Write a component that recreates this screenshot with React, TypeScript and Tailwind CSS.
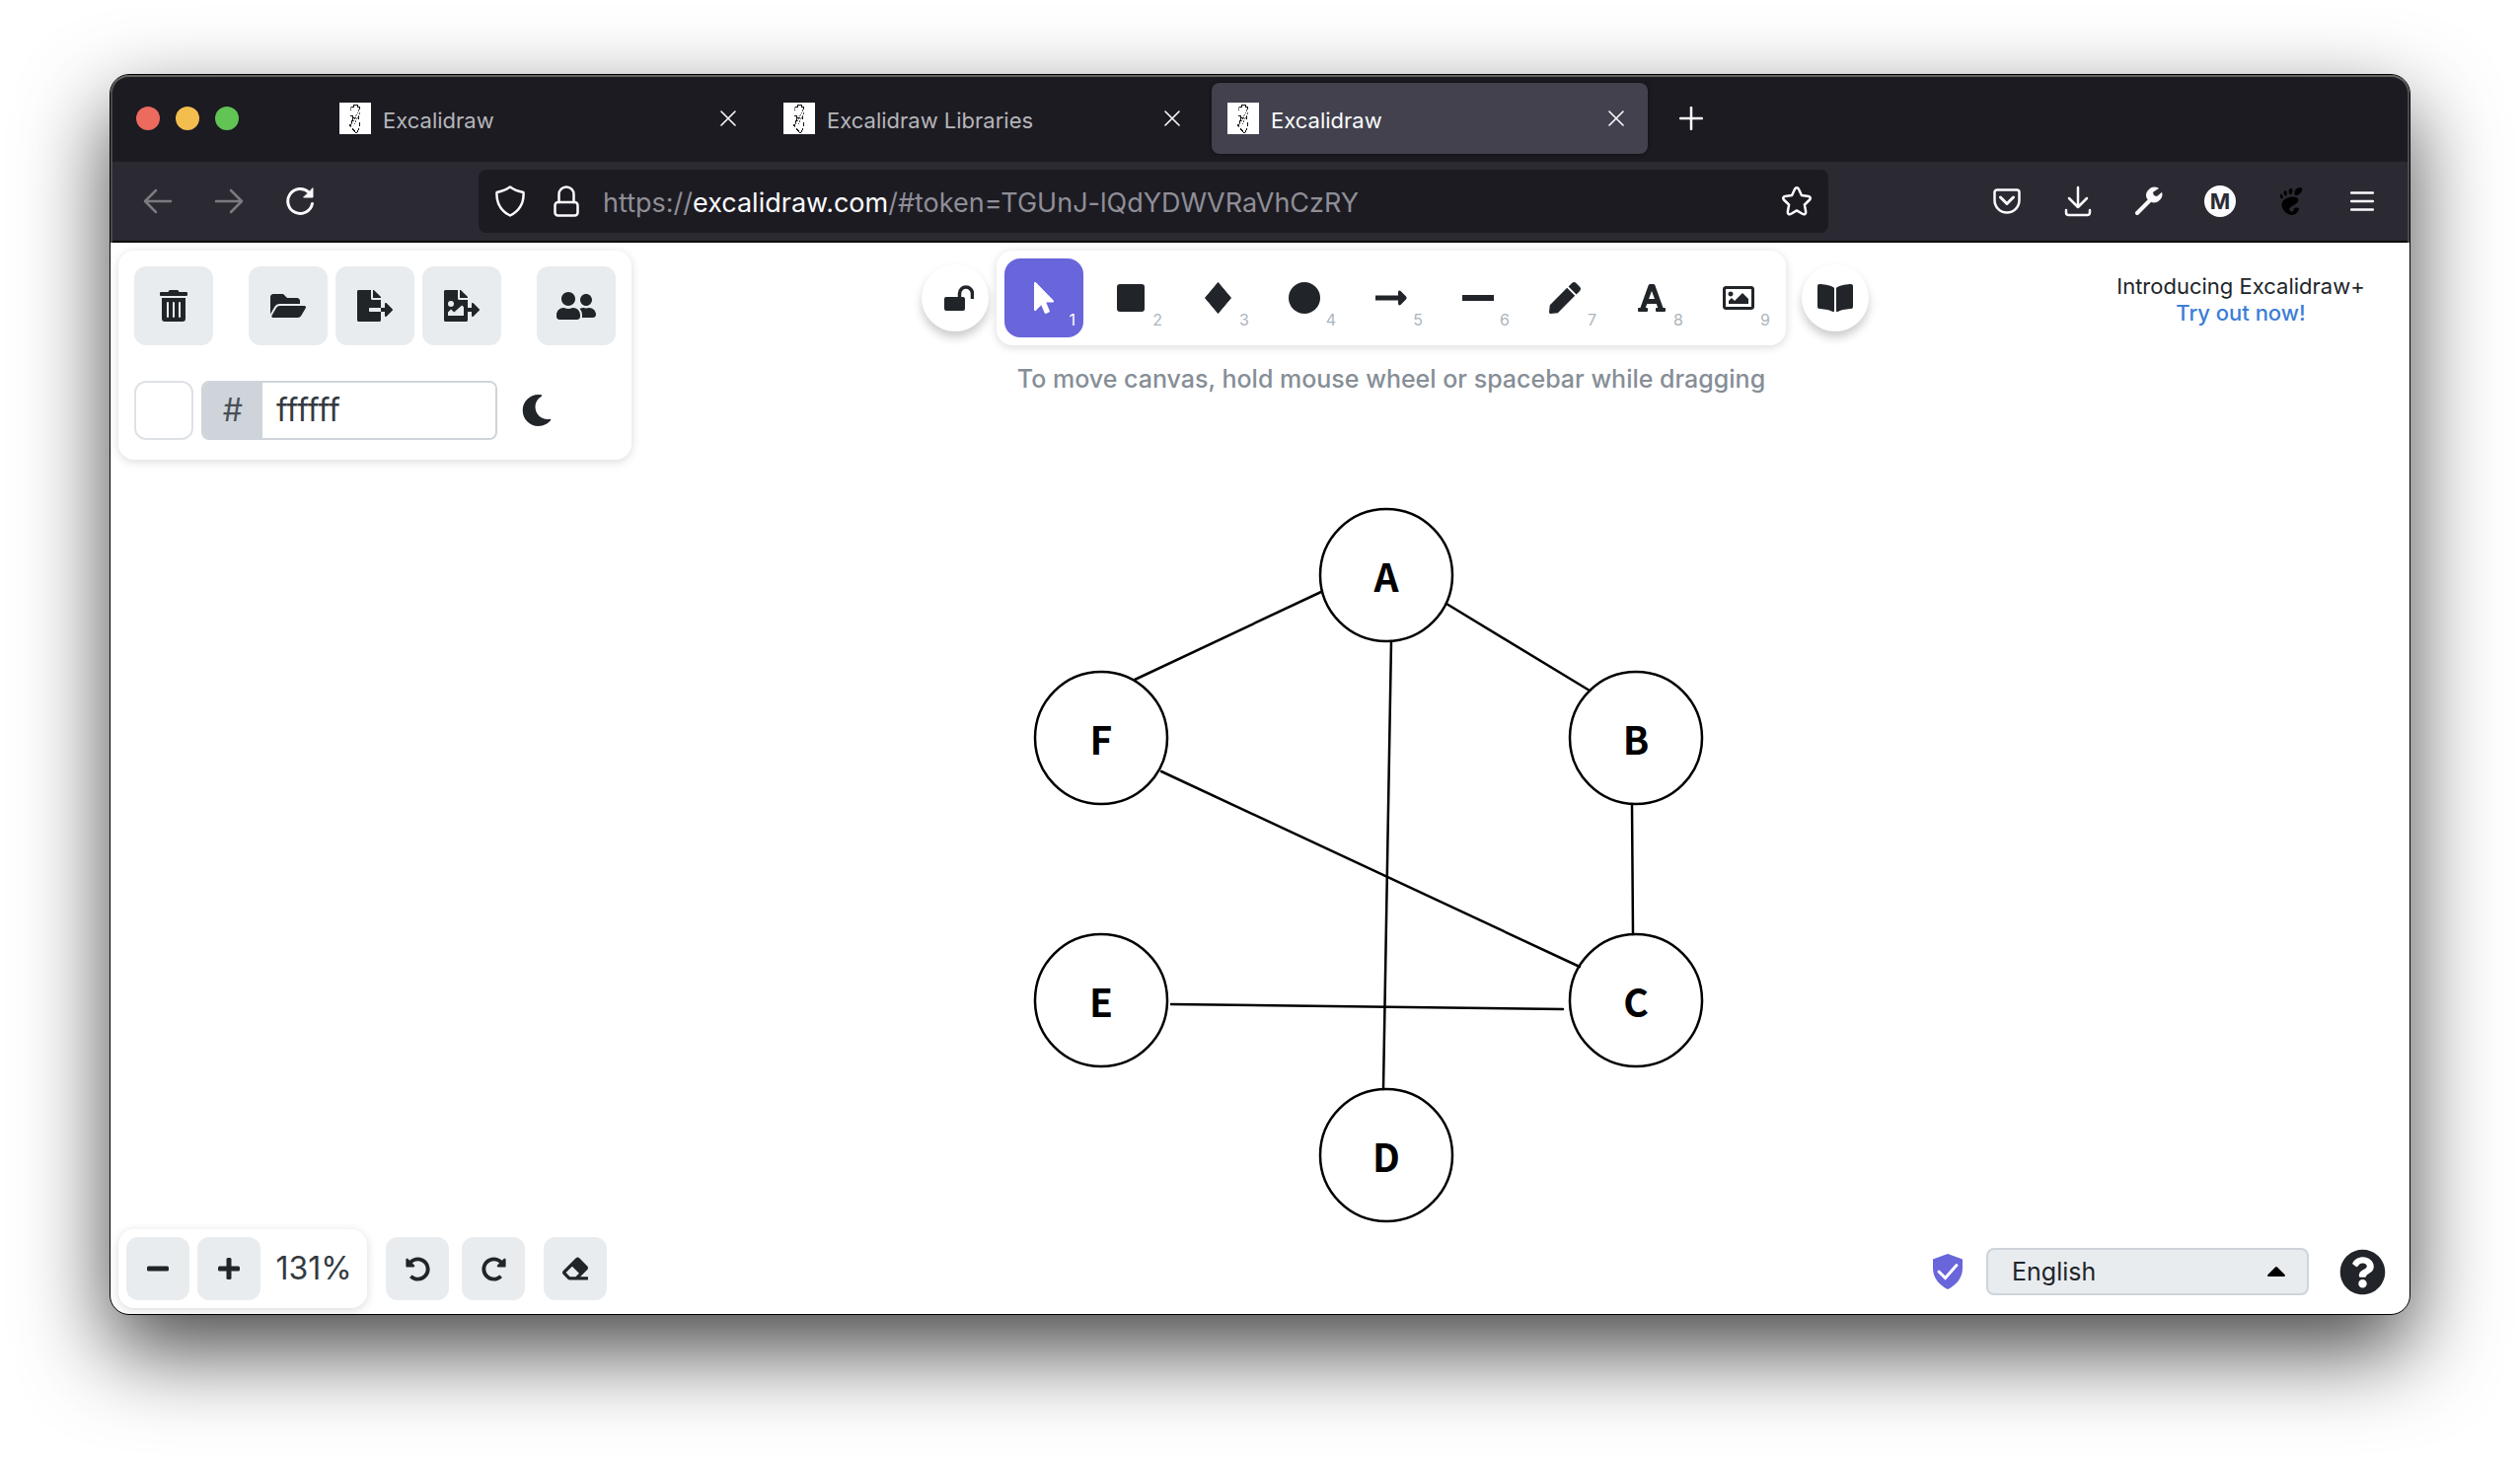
import React from "react";
import {
  FaBookOpen,
  FaEraser,
  FaFileExport,
  FaFolderOpen,
  FaFont,
  FaMoon,
  FaMousePointer,
  FaPen,
  FaQuestionCircle,
  FaRedoAlt,
  FaRegImage,
  FaTrashAlt,
  FaUndoAlt,
  FaUserFriends,
} from "react-icons/fa";
import { SiGnome } from "react-icons/si";

function Favicon() {
  return (
    <svg width="32" height="32" viewBox="0 0 32 32" shapeRendering="crispEdges" className="shrink-0 bg-white">
      <g fill="none" stroke="#111" strokeWidth="1">
        <path d="M12 4h2v-2h4v2h2v3" />
        <path d="M11 5v3" strokeDasharray="1 1" />
        <path d="M20 7l-9 18M21 10l-7 14" stroke="#555" strokeDasharray="2 1" />
        <path d="M11 13h2v2h4M14 16l-2 5" />
        <path d="M19 14v3M20 20v4M13 26l3 4h2l2-4" />
        <path d="M10 23h2" strokeWidth="2" />
      </g>
    </svg>
  );
}

function Tab({ title, active = false }: { title: string; active?: boolean }) {
  return (
    <div
      role="tab"
      aria-selected={active}
      className={
        active
          ? "flex h-[72px] w-[442px] min-w-0 items-center gap-3 rounded-lg bg-[#42414d] px-4 text-[#fbfbfe] shadow-[0_0_4px_rgba(0,0,0,0.5)]"
          : "flex h-[72px] w-[442px] min-w-0 items-center gap-3 rounded-lg px-4 text-[#b5b5ba]"
      }
    >
      <Favicon />
      <span className="min-w-0 flex-1 truncate pt-[3px] text-[22px] leading-7">{title}</span>
      <button aria-label={`Close ${title}`} className="flex size-8 items-center justify-center text-[#fbfbfe]">
        <svg width="16" height="16" viewBox="0 0 16 16" fill="none" stroke="currentColor" strokeWidth="1.6" strokeLinecap="round">
          <path d="M1 1l14 14M15 1L1 15" />
        </svg>
      </button>
    </div>
  );
}

function NavButton({ label, muted = false, children }: { label: string; muted?: boolean; children: React.ReactNode }) {
  return (
    <button
      aria-label={label}
      className={
        muted
          ? "flex h-16 w-14 items-center justify-center text-[#7b7b82]"
          : "flex h-16 w-14 items-center justify-center text-[#fbfbfe]"
      }
    >
      {children}
    </button>
  );
}

const line = {
  fill: "none",
  stroke: "currentColor",
  strokeWidth: 2.5,
  strokeLinecap: "round" as const,
  strokeLinejoin: "round" as const,
};

function BrowserHeader() {
  return (
    <header className="relative rounded-t-[19px] bg-[#1c1b22] after:pointer-events-none after:absolute after:inset-0 after:rounded-t-[19px] after:shadow-[inset_0_2px_0_#626461,inset_2px_0_0_#4a4a50,inset_-2px_0_0_#4a4a50] after:content-['']">
      <div className="flex h-[88px] items-center pl-[26px]">
        <div className="mr-[86px] flex gap-4">
          <button aria-label="Close window" className="size-6 rounded-full bg-[#ec6a5e]" />
          <button aria-label="Minimize window" className="size-6 rounded-full bg-[#f4be4f]" />
          <button aria-label="Zoom window" className="size-6 rounded-full bg-[#61c454]" />
        </div>
        <div role="tablist" className="flex min-w-0 gap-2">
          <Tab title="Excalidraw" />
          <Tab title="Excalidraw Libraries" />
          <Tab title="Excalidraw" active />
        </div>
        <button aria-label="New tab" className="ml-4 flex size-14 items-center justify-center text-[#fbfbfe]">
          <svg width="24" height="24" viewBox="0 0 24 24" {...line}>
            <path d="M12 1v22M1 12h22" />
          </svg>
        </button>
      </div>

      <nav className="flex h-[82px] items-center border-b-2 border-[#0c0c0d] bg-[#2b2a33] px-5">
        <div className="flex gap-4">
          <NavButton label="Back" muted>
            <svg width="30" height="26" viewBox="0 0 30 26" {...line}>
              <path d="M28 13H2M13 2L2 13l11 11" />
            </svg>
          </NavButton>
          <NavButton label="Forward" muted>
            <svg width="30" height="26" viewBox="0 0 30 26" {...line}>
              <path d="M2 13h26M17 2l11 11-11 11" />
            </svg>
          </NavButton>
          <NavButton label="Reload">
            <svg width="30" height="30" viewBox="0 0 30 30" {...line} strokeWidth="3">
              <path d="M27.500 17.500A12.500 12.500 0 1 1 24 6" />
              <path d="M28 2v9h-9z" fill="currentColor" stroke="currentColor" strokeWidth="1" />
            </svg>
          </NavButton>
        </div>

        <div className="mx-[153px] flex h-16 min-w-0 flex-1 items-center rounded-lg bg-[#1c1b22] pr-4 pl-4 text-[#fbfbfe]">
          <svg width="32" height="32" viewBox="0 0 32 32" {...line} className="shrink-0">
            <path d="M16 1.500c4 3 8.500 4.500 13.500 5.500.6 10-3.500 18.500-13.500 23.500C6 25.500 1.900 17 2.500 7 7.500 6 12 4.500 16 1.500z" />
          </svg>
          <svg width="26" height="32" viewBox="0 0 26 32" {...line} className="ml-7 shrink-0">
            <rect x="1.500" y="17" width="23" height="13.500" rx="3" />
            <path d="M5.500 17V9a7.500 7.500 0 0 1 15 0v8" />
          </svg>
          <div
            role="textbox"
            aria-label="Address"
            className="ml-6 min-w-0 flex-1 truncate pt-[3px] text-[27px] leading-9 text-[#8f8e97]"
          >
            https://<span className="text-[#fbfbfe]">excalidraw.com</span>/#token=TGUnJ-lQdYDWVRaVhCzRY
          </div>
          <button aria-label="Bookmark this page">
            <svg width="32" height="32" viewBox="0 0 32 32" {...line}>
              <path d="M16 2.200c.9 0 1.500.6 1.900 1.400l3 6.500 7 .9c1.900.3 2.500 2.200 1.200 3.500l-5.200 5 1.300 7.300c.3 1.800-1.500 3-3.100 2.200L16 25.400 9.900 29c-1.600.8-3.400-.4-3.100-2.200l1.300-7.300-5.200-5c-1.300-1.300-.7-3.200 1.200-3.500l7-.9 3-6.500c.4-.8 1-1.400 1.900-1.400z" />
            </svg>
          </button>
        </div>

        <div className="flex gap-4">
          <NavButton label="Save to Pocket">
            <svg width="28" height="26" viewBox="0 0 28 26" {...line}>
              <path d="M4 1.500h20A2.500 2.500 0 0 1 26.500 4v8a12.500 12.500 0 0 1-25 0V4A2.500 2.500 0 0 1 4 1.500z" />
              <path d="M7.500 9l6.500 6.500L20.500 9" strokeWidth="3" />
            </svg>
          </NavButton>
          <NavButton label="Downloads">
            <svg width="28" height="32" viewBox="0 0 28 32" {...line}>
              <path d="M14 2v20M5 13l9 9 9-9M2 25v2.500A2.500 2.500 0 0 0 4.500 30h19a2.500 2.500 0 0 0 2.500-2.500V25" />
            </svg>
          </NavButton>
          <NavButton label="Developer tools">
            <svg width="30" height="30" viewBox="0 0 30 30" {...line}>
              <path d="M3 27L16 14" strokeWidth="4" />
              <path
                d="M24 1.800a8 8 0 0 0-10.700 10.500 8 8 0 0 0 14.600-5.800L23 10.500l-3.500-1-1-3.500z"
                fill="currentColor"
                strokeWidth="1"
              />
            </svg>
          </NavButton>
          <NavButton label="Account">
            <span className="flex size-8 items-center justify-center rounded-full bg-[#fbfbfe] text-[22px] leading-none font-bold text-[#2b2a33]">
              M
            </span>
          </NavButton>
          <NavButton label="GNOME Shell integration">
            <SiGnome size={28} color="#000" />
          </NavButton>
          <NavButton label="Open menu">
            <svg width="24" height="20" viewBox="0 0 24 20" {...line}>
              <path d="M1 1.500h22M1 10h22M1 18.500h22" />
            </svg>
          </NavButton>
        </div>
      </nav>
    </header>
  );
}

function ToolButton({ label, children }: { label: string; children: React.ReactNode }) {
  return (
    <button
      aria-label={label}
      className="flex size-20 items-center justify-center rounded-xl bg-[#e9ecef] text-[#212529]"
    >
      {children}
    </button>
  );
}

function SmallButton({ label, children }: { label: string; children: React.ReactNode }) {
  return (
    <button
      aria-label={label}
      className="flex size-16 items-center justify-center rounded-xl bg-[#e9ecef] text-[#212529]"
    >
      {children}
    </button>
  );
}

function ExportImageIcon() {
  return (
    <svg width="36" height="32" viewBox="0 0 576 512" fill="currentColor">
      <path d="M384 121.900c0-6.300-2.500-12.400-7-16.900L279.100 7c-4.500-4.500-10.600-7-17-7H256v128h128z" />
      <path
        fillRule="evenodd"
        d="M224 136V0H24C10.700 0 0 10.700 0 24v464c0 13.300 10.700 24 24 24h336c13.300 0 24-10.700 24-24V352h64v65c0 15 17 22 27 12l96-97c7-7 7-17 0-24l-96-95c-10-10-27-3-27 11v64h-64V160H248c-13.200 0-24-10.800-24-24zM112 176a48 48 0 1 1 0 96 48 48 0 0 1 0-96zM64 416v-55l48-50 52 50 116-106c6-6 14-6 20 0l20 20v141z"
      />
    </svg>
  );
}

function MainMenu() {
  return (
    <section className="w-[520px] shrink-0 rounded-2xl bg-white px-4 pt-4 pb-5 shadow-[0_2px_10px_rgba(0,0,0,0.15)]">
      <div className="flex justify-between">
        <ToolButton label="Reset the canvas">
          <FaTrashAlt size={32} />
        </ToolButton>
        <div className="flex gap-2">
          <ToolButton label="Open">
            <FaFolderOpen size={36} />
          </ToolButton>
          <ToolButton label="Save as">
            <FaFileExport size={36} />
          </ToolButton>
          <ToolButton label="Save as image">
            <ExportImageIcon />
          </ToolButton>
        </div>
        <ToolButton label="Live collaboration">
          <FaUserFriends size={40} />
        </ToolButton>
      </div>
      <div className="mt-9 flex items-center">
        <button aria-label="Canvas background" className="size-[60px] rounded-xl border-2 border-[#dee2e6] bg-white" />
        <label className="ml-2 flex h-[60px] w-[300px] overflow-hidden rounded-lg border-2 border-[#ced4da] text-[#343a40]">
          <span className="flex w-[60px] items-center justify-center bg-[#ced4da] text-[32px] leading-10 text-[#495057]">#</span>
          <input aria-label="Hex color" defaultValue="ffffff" className="min-w-0 flex-1 bg-white px-3.5 text-[32px] leading-10 outline-none" />
        </label>
        <button aria-label="Dark mode" className="ml-6 text-[#212529]">
          <FaMoon size={32} />
        </button>
      </div>
    </section>
  );
}

const tools: { label: string; icon: React.ReactNode }[] = [
  { label: "Selection", icon: <FaMousePointer size={32} /> },
  { label: "Rectangle", icon: <span className="size-7 rounded-[3px] bg-current" /> },
  {
    label: "Diamond",
    icon: (
      <svg width="27" height="32" viewBox="0 0 27 32" fill="currentColor">
        <path d="M13.500 0.500L26.500 16 13.500 31.500 0.500 16z" stroke="currentColor" strokeLinejoin="round" />
      </svg>
    ),
  },
  { label: "Ellipse", icon: <span className="size-8 rounded-full bg-current" /> },
  {
    label: "Arrow",
    icon: (
      <svg width="32" height="16" viewBox="0 0 32 16" fill="currentColor">
        <path d="M0 5.500h23V2.500c0-2 1.600-2.500 2.800-1.300l5.200 5.400c.8.8.8 2 0 2.800l-5.200 5.400c-1.200 1.200-2.800.7-2.800-1.300v-3H0z" />
      </svg>
    ),
  },
  { label: "Line", icon: <span className="h-[6px] w-8 bg-current" /> },
  { label: "Draw", icon: <FaPen size={32} /> },
  { label: "Text", icon: <FaFont size={32} /> },
  { label: "Insert image", icon: <FaRegImage size={32} /> },
];

function Toolbar() {
  return (
    <div className="flex items-start">
      <button
        aria-label="Keep selected tool active after drawing"
        className="mt-[14px] flex size-[68px] items-center justify-center rounded-full bg-white text-[#212529] shadow-[0_6px_10px_rgba(0,0,0,0.2)]"
      >
        <svg width="30" height="26" viewBox="0 0 30 26" className="ml-2">
          <rect x="0" y="12" width="21" height="14" rx="2" fill="currentColor" />
          <path d="M15.500 13V8.500a6.500 6.500 0 0 1 13 0V14" fill="none" stroke="currentColor" strokeWidth="3.500" />
        </svg>
      </button>
      <div className="ml-2 flex flex-col items-center">
        <div role="toolbar" className="flex gap-2 rounded-2xl bg-white p-2 shadow-[0_2px_10px_rgba(0,0,0,0.15)]">
          {tools.map((tool, index) => (
            <button
              key={tool.label}
              aria-label={tool.label}
              aria-pressed={index === 0}
              className={
                index === 0
                  ? "relative flex size-20 items-center justify-center rounded-2xl bg-[#6965db] text-white"
                  : "relative flex size-20 items-center justify-center rounded-2xl text-[#212529]"
              }
            >
              {tool.icon}
              <span
                className={
                  index === 0
                    ? "absolute right-2 bottom-2 text-base leading-5"
                    : "absolute right-2 bottom-2 text-base leading-5 text-[#adb5bd]"
                }
              >
                {index + 1}
              </span>
            </button>
          ))}
        </div>
        <p className="mt-4 text-[25px] leading-9 font-medium text-[#868e96]">
          To move canvas, hold mouse wheel or spacebar while dragging
        </p>
      </div>
      <button
        aria-label="Library"
        className="mt-[14px] ml-4 flex size-[68px] items-center justify-center rounded-full bg-white text-[#212529] shadow-[0_6px_10px_rgba(0,0,0,0.2)]"
      >
        <FaBookOpen size={36} />
      </button>
    </div>
  );
}

const nodes = [
  { id: "A", x: 365, y: 73 },
  { id: "B", x: 618, y: 238 },
  { id: "C", x: 618, y: 504 },
  { id: "D", x: 365, y: 661 },
  { id: "E", x: 76, y: 504 },
  { id: "F", x: 76, y: 238 },
];

function Diagram() {
  return (
    <div className="absolute top-[264px] left-[928px] h-[740px] w-[696px]">
      <svg viewBox="0 0 696 740" className="absolute inset-0" fill="none" stroke="#000" strokeWidth="2.500" strokeLinecap="round">
        <path d="M299 90L110 179" />
        <path d="M426 102L571 190" />
        <path d="M370 140L362 594" />
        <path d="M137 272L561 470" />
        <path d="M614 305L615 437" />
        <path d="M147 508L544 513" />
        {nodes.map((node) => (
          <circle key={node.id} cx={node.x} cy={node.y} r="67" />
        ))}
      </svg>
      {nodes.map((node) => (
        <div
          key={node.id}
          className="absolute flex size-[136px] -translate-x-1/2 -translate-y-1/2 items-center justify-center font-['Noto_Sans_CJK_JP','Noto_Sans',sans-serif] text-[39px] leading-none font-bold text-black"
          style={{ left: node.x, top: node.y }}
        >
          {node.id}
        </div>
      ))}
    </div>
  );
}

function Footer() {
  return (
    <footer className="relative flex items-end justify-between pb-[6px]">
      <div className="flex items-center">
        <div className="flex w-[252px] items-center gap-2 rounded-2xl bg-white p-2 shadow-[0_2px_10px_rgba(0,0,0,0.15)]">
          <SmallButton label="Zoom out">
            <svg width="22" height="22" viewBox="0 0 22 22">
              <rect y="8.500" width="22" height="5" rx="1.500" fill="currentColor" />
            </svg>
          </SmallButton>
          <SmallButton label="Zoom in">
            <svg width="22" height="22" viewBox="0 0 22 22" fill="currentColor">
              <rect y="8.500" width="22" height="5" rx="1.500" />
              <rect x="8.500" width="5" height="22" rx="1.500" />
            </svg>
          </SmallButton>
          <span className="flex-1 text-center text-[32px] leading-10 text-[#343a40]">131%</span>
        </div>
        <div className="ml-[19px] flex gap-[13px]">
          <SmallButton label="Undo">
            <FaUndoAlt size={25} />
          </SmallButton>
          <SmallButton label="Redo">
            <FaRedoAlt size={25} />
          </SmallButton>
        </div>
        <div className="ml-[19px]">
          <SmallButton label="Eraser">
            <FaEraser size={26} />
          </SmallButton>
        </div>
      </div>

      <div className="mr-4 mb-[13px] flex items-center">
        <a href="#encryption" aria-label="End-to-end encrypted" className="text-[#6965db]">
          <svg width="30" height="36" viewBox="0 0 30 36">
            <path d="M15 0l15 5.500v9c0 9.500-6 17-15 21.500C6 31.500 0 24 0 14.500v-9z" fill="currentColor" />
            <path d="M6 18l6.500 6.500L24 11.500" fill="none" stroke="#fff" strokeWidth="3" strokeLinecap="round" />
          </svg>
        </a>
        <div className="relative ml-6">
          <select
            aria-label="Language"
            className="h-12 w-[327px] appearance-none rounded-lg border-2 border-[#ced4da] bg-[#e9ecef] px-6 text-[25px] leading-8 text-[#212529]"
          >
            <option>English</option>
          </select>
          <svg width="18" height="10" viewBox="0 0 18 10" className="pointer-events-none absolute top-[19px] right-6">
            <path d="M8 .5a1.500 1.500 0 0 1 2 0l7.500 7.500c.8.8.3 2-.8 2H1.300C.2 10-.3 8.800.5 8z" fill="#000" />
          </svg>
        </div>
        <button aria-label="Help" className="ml-[31px] text-[#212529]">
          <FaQuestionCircle size={47} />
        </button>
      </div>
    </footer>
  );
}

export default function App() {
  return (
    <div className="flex min-h-screen flex-col bg-white px-[111px] pt-[75px] pb-[147px] font-[Inter,'Liberation_Sans',sans-serif]">
      <div className="flex flex-1 flex-col rounded-[20px] border border-black bg-white shadow-[0_36px_88px_rgba(0,0,0,0.72)]">
        <BrowserHeader />
        <main className="relative flex flex-1 flex-col justify-between px-2 pt-2">
          <Diagram />
          <div className="relative flex items-start">
            <MainMenu />
            <div className="flex flex-1 justify-center pl-11">
              <Toolbar />
            </div>
            <aside className="mt-[23px] mr-9 w-[254px] text-center text-[22px] leading-[27px] whitespace-nowrap text-[#212529]">
              <p>Introducing Excalidraw+</p>
              <a href="#plus" className="font-medium text-[#3b7ed8]">
                Try out now!
              </a>
            </aside>
          </div>
          <Footer />
        </main>
      </div>
    </div>
  );
}
